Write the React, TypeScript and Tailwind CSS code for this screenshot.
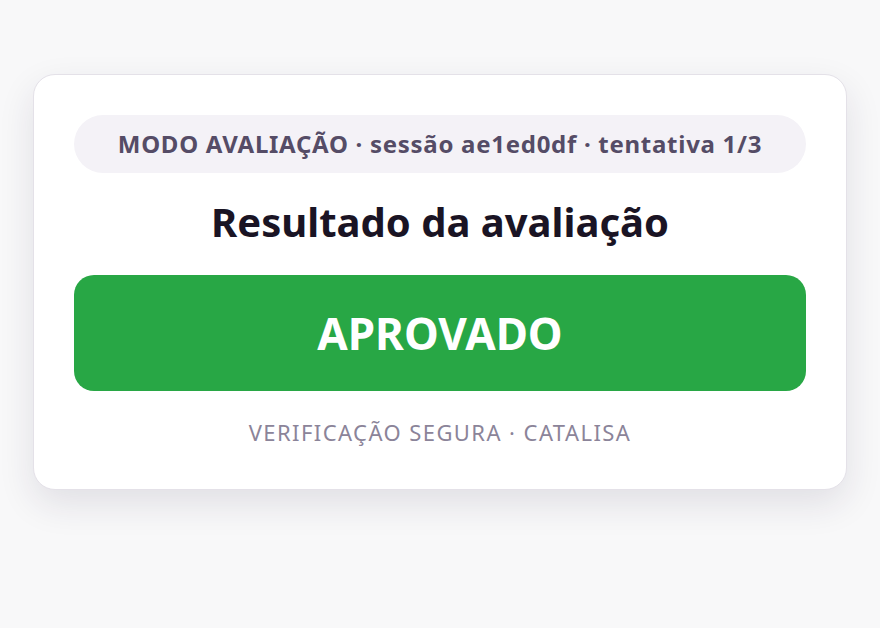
export default function App() {
  return (
    <div
      className="min-h-screen w-full bg-[#f8f8f9] px-[33px] pt-[74px]"
      style={{ fontFamily: '"Noto Sans", "Open Sans", sans-serif' }}
    >
      <div className="rounded-[22px] border border-[#e4e1e8] bg-white p-10 shadow-[0_14px_36px_rgba(40,30,60,0.11)]">
        <div className="flex h-[58px] items-center justify-center rounded-full bg-[#f4f2f7] text-[24px] font-bold tracking-[0.03em] text-[#554c66]">
          MODO AVALIAÇÃO · sessão ae1ed0df · tentativa 1/3
        </div>
        <h1 className="mt-[23px] text-center text-[40px] font-bold leading-[52px] text-[#1a1424]">
          Resultado da avaliação
        </h1>
        <div className="mt-[27px] flex h-[116px] items-center justify-center rounded-[20px] bg-[#28a745] text-[44px] font-bold text-white">
          APROVADO
        </div>
        <p className="mt-[25px] text-center text-[22px] leading-[33px] tracking-[0.065em] text-[#8b8499]">
          VERIFICAÇÃO SEGURA · CATALISA
        </p>
      </div>
    </div>
  );
}
